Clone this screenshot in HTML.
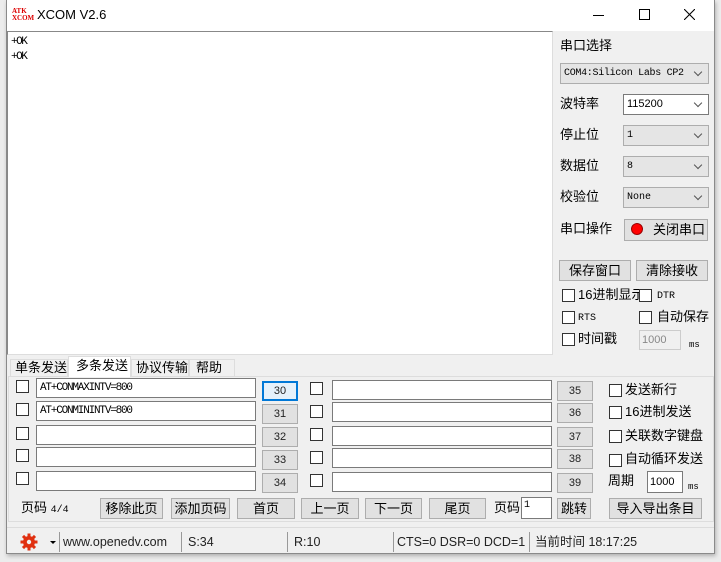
<!DOCTYPE html>
<html><head><meta charset="utf-8"><style>
*{box-sizing:border-box;margin:0;padding:0}
body{width:721px;height:562px;background:#ececec;position:relative;overflow:hidden;font-family:"Liberation Sans","Noto Sans CJK SC",sans-serif;font-size:12px;color:#000;line-height:16px}
.a{position:absolute}
.win{left:6px;top:0;width:709px;height:554px;background:#f0f0f0;border:1px solid #8a8a8a;box-shadow:1px 2px 4px rgba(0,0,0,.25)}
.title{left:7px;top:0;width:707px;height:31px;background:#fff}
.cb{position:absolute;width:13px;height:13px;border:1px solid #333;background:#fff}
.tf{position:absolute;height:20px;border:1px solid #7a7a7a;background:#fff;font-family:"Liberation Mono",monospace;font-size:11px;line-height:14px;padding:2px 0 0 3px;letter-spacing:-1.2px}
.bt{position:absolute;height:21px;border:1px solid #adadad;background:#e1e1e1;text-align:center;line-height:19px;font-size:13px}
.nb{position:absolute;width:36px;height:20px;border:1px solid #adadad;background:#e1e1e1;text-align:center;line-height:18px;font-size:11px;color:#222}
.lb{position:absolute;font-size:13px;white-space:nowrap;line-height:16px}
.mono{font-family:"Liberation Mono",monospace;font-size:10px;margin-top:2px}
.combo{position:absolute;height:21px;border:1px solid #adadad;background:#e5e5e5;font-family:"Liberation Mono",monospace;font-size:10px;line-height:19px;padding:0 0 0 3px}
.combo:after{content:"";position:absolute;right:7px;top:5px;width:5px;height:5px;border-right:1px solid #555;border-bottom:1px solid #555;transform:rotate(45deg)}
.sep{position:absolute;top:532px;width:1px;height:20px;background:#999}
.st{position:absolute;top:534px;font-size:12.5px;color:#222;white-space:nowrap;line-height:16px}
.tab{position:absolute;border:1px solid #ddd;border-bottom:none;font-size:13px;line-height:15px;white-space:nowrap}
</style></head><body>
<div class="a win"></div>
<div class="a title"></div>
<div class="a" style="left:12px;top:8px;font-size:7px;line-height:7px;color:#d00;font-weight:bold;font-family:'Liberation Serif',serif">ATK<br>XCOM</div>
<div class="a" style="left:37px;top:7px;font-size:13px">XCOM V2.6</div>
<div class="a" style="left:593px;top:15px;width:11px;height:1px;background:#000"></div>
<div class="a" style="left:639px;top:9px;width:11px;height:11px;border:1px solid #000"></div>
<svg class="a" style="left:684px;top:9px" width="11" height="11"><path d="M0 0L11 11M11 0L0 11" stroke="#000" stroke-width="1.1"/></svg>

<div class="a" style="left:7px;top:31px;width:546px;height:324px;background:#fff;border:1px solid #888;border-right-color:#ddd;border-bottom-color:#ddd"></div>
<div class="a" style="left:11px;top:35px;font-family:'Liberation Mono',monospace;font-size:11px;line-height:15px;letter-spacing:-1.5px">+OK<br>+OK</div>

<div class="lb" style="left:560px;top:38px">串口选择</div>
<div class="combo" style="left:560px;top:63px;width:149px;letter-spacing:-0.3px">COM4:Silicon Labs CP2</div>
<div class="lb" style="left:560px;top:96px">波特率</div>
<div class="combo" style="left:623px;top:94px;width:86px;background:#fff;border-color:#7a7a7a;font-family:'Liberation Sans';font-size:11px">115200</div>
<div class="lb" style="left:560px;top:127px">停止位</div>
<div class="combo" style="left:623px;top:125px;width:86px">1</div>
<div class="lb" style="left:560px;top:158px">数据位</div>
<div class="combo" style="left:623px;top:156px;width:86px">8</div>
<div class="lb" style="left:560px;top:189px">校验位</div>
<div class="combo" style="left:623px;top:187px;width:86px">None</div>
<div class="lb" style="left:560px;top:221px">串口操作</div>
<div class="bt" style="left:624px;top:219px;width:84px;height:22px;text-align:left;padding-left:28px">关闭串口</div>
<div class="a" style="left:631px;top:223px;width:12px;height:12px;border-radius:50%;background:#f00;border:1px solid #900"></div>
<div class="bt" style="left:559px;top:260px;width:72px">保存窗口</div>
<div class="bt" style="left:636px;top:260px;width:72px">清除接收</div>
<div class="cb" style="left:562px;top:289px"></div><div class="lb" style="left:578px;top:287px">16进制显示</div>
<div class="cb" style="left:639px;top:289px"></div><div class="lb mono" style="left:657px;top:287px">DTR</div>
<div class="cb" style="left:562px;top:311px"></div><div class="lb mono" style="left:578px;top:309px">RTS</div>
<div class="cb" style="left:639px;top:311px"></div><div class="lb" style="left:657px;top:309px">自动保存</div>
<div class="cb" style="left:562px;top:333px"></div><div class="lb" style="left:578px;top:331px">时间戳</div>
<div class="a" style="left:639px;top:330px;width:42px;height:20px;border:1px solid #ccc;color:#888;font-size:11px;padding:1px 0 0 2px">1000</div>
<div class="lb mono" style="left:689px;top:335px;font-size:9px">ms</div>

<div class="a" style="left:8px;top:376px;width:706px;height:146px;border:1px solid #ddd;background:#f0f0f0"></div>
<div class="tab" style="left:10px;top:359px;width:58px;height:18px;padding-left:4px">单条发送</div>
<div class="tab" style="left:68px;top:356px;width:63px;height:21px;background:#fff;padding-left:7px;padding-top:1px">多条发送</div>
<div class="tab" style="left:131px;top:359px;width:58px;height:18px;padding-left:4px">协议传输</div>
<div class="tab" style="left:189px;top:359px;width:46px;height:18px;padding-left:6px">帮助</div>

<div class="cb" style="left:16px;top:380px"></div><div class="tf" style="left:36px;top:378px;width:220px">AT+CONMAXINTV=800</div><div class="nb" style="left:262px;top:381px;border:2px solid #0078d7;background:#e5f1fb;line-height:16px">30</div>
<div class="cb" style="left:16px;top:403px"></div><div class="tf" style="left:36px;top:401px;width:220px">AT+CONMININTV=800</div><div class="nb" style="left:262px;top:404px">31</div>
<div class="cb" style="left:16px;top:427px"></div><div class="tf" style="left:36px;top:425px;width:220px"></div><div class="nb" style="left:262px;top:427px">32</div>
<div class="cb" style="left:16px;top:449px"></div><div class="tf" style="left:36px;top:447px;width:220px"></div><div class="nb" style="left:262px;top:450px">33</div>
<div class="cb" style="left:16px;top:472px"></div><div class="tf" style="left:36px;top:471px;width:220px"></div><div class="nb" style="left:262px;top:473px">34</div>

<div class="cb" style="left:310px;top:382px"></div><div class="tf" style="left:332px;top:380px;width:220px"></div><div class="nb" style="left:557px;top:381px">35</div>
<div class="cb" style="left:310px;top:405px"></div><div class="tf" style="left:332px;top:402px;width:220px"></div><div class="nb" style="left:557px;top:403px">36</div>
<div class="cb" style="left:310px;top:428px"></div><div class="tf" style="left:332px;top:426px;width:220px"></div><div class="nb" style="left:557px;top:427px">37</div>
<div class="cb" style="left:310px;top:451px"></div><div class="tf" style="left:332px;top:448px;width:220px"></div><div class="nb" style="left:557px;top:449px">38</div>
<div class="cb" style="left:310px;top:474px"></div><div class="tf" style="left:332px;top:472px;width:220px"></div><div class="nb" style="left:557px;top:473px">39</div>

<div class="cb" style="left:609px;top:384px"></div><div class="lb" style="left:625px;top:382px">发送新行</div>
<div class="cb" style="left:609px;top:406px"></div><div class="lb" style="left:625px;top:404px">16进制发送</div>
<div class="cb" style="left:609px;top:430px"></div><div class="lb" style="left:625px;top:428px">关联数字键盘</div>
<div class="cb" style="left:609px;top:454px"></div><div class="lb" style="left:625px;top:451px">自动循环发送</div>
<div class="lb" style="left:608px;top:473px">周期</div>
<div class="a" style="left:647px;top:471px;width:36px;height:22px;border:1px solid #7a7a7a;background:#fff;font-size:11px;padding:2px 0 0 2px">1000</div>
<div class="lb mono" style="left:688px;top:477px;font-size:9px">ms</div>

<div class="lb" style="left:21px;top:500px">页码 <span style="font-family:'Liberation Mono';font-size:10px">4/4</span></div>
<div class="bt" style="left:100px;top:498px;width:63px">移除此页</div>
<div class="bt" style="left:171px;top:498px;width:59px">添加页码</div>
<div class="bt" style="left:237px;top:498px;width:58px">首页</div>
<div class="bt" style="left:301px;top:498px;width:58px">上一页</div>
<div class="bt" style="left:365px;top:498px;width:57px">下一页</div>
<div class="bt" style="left:429px;top:498px;width:57px">尾页</div>
<div class="lb" style="left:494px;top:500px">页码</div>
<div class="a" style="left:521px;top:497px;width:31px;height:22px;border:1px solid #7a7a7a;background:#fff;font-size:10px;line-height:12px;padding:2px 0 0 2px;font-family:'Liberation Mono'">1</div>
<div class="bt" style="left:557px;top:498px;width:34px">跳转</div>
<div class="bt" style="left:609px;top:498px;width:93px">导入导出条目</div>

<div class="a" style="left:7px;top:527px;width:707px;height:1px;background:#dcdcdc"></div>
<svg class="a" style="left:20px;top:533px" width="18" height="18" viewBox="0 0 18 18"><g fill="#e03010"><circle cx="9" cy="9" r="6"/><rect x="7.5" y="0.5" width="3" height="17"/><rect x="0.5" y="7.5" width="17" height="3"/><rect x="7.5" y="0.5" width="3" height="17" transform="rotate(45 9 9)"/><rect x="7.5" y="0.5" width="3" height="17" transform="rotate(-45 9 9)"/></g><circle cx="9" cy="9" r="2.2" fill="#f0f0f0"/></svg>
<div class="a" style="left:50px;top:541px;width:0;height:0;border-left:3px solid transparent;border-right:3px solid transparent;border-top:3px solid #000"></div>
<div class="sep" style="left:59px"></div>
<div class="st" style="left:63px">www.openedv.com</div>
<div class="sep" style="left:181px"></div>
<div class="st" style="left:188px">S:34</div>
<div class="sep" style="left:287px"></div>
<div class="st" style="left:294px">R:10</div>
<div class="sep" style="left:393px"></div>
<div class="st" style="left:397px">CTS=0 DSR=0 DCD=1</div>
<div class="sep" style="left:529px"></div>
<div class="st" style="left:535px">当前时间 18:17:25</div>
</body></html>
